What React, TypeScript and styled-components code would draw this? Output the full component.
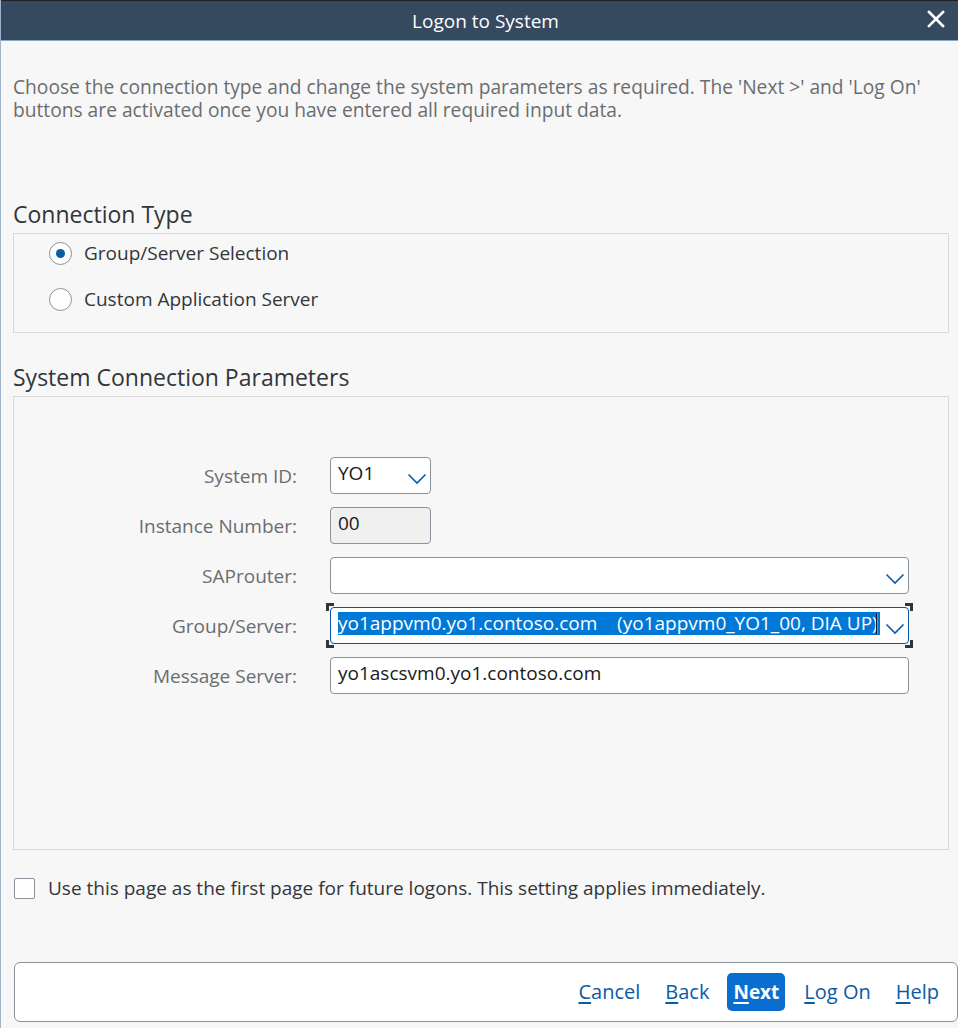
import React from "react";
import styled, { createGlobalStyle } from "styled-components";

const Global = createGlobalStyle`
  html, body { margin: 0; padding: 0; background: #f7f7f7; }
  body { font-family: "Open Sans", "Noto Sans", sans-serif; }
  * { box-sizing: border-box; }
`;

const Window = styled.div`
  width: 958px;
  height: 1028px;
  background: #f7f7f7;
  border-left: 1px solid #9fb4cc;
  display: flex;
  flex-direction: column;
  overflow: hidden;
`;

const TitleBar = styled.div`
  height: 41px;
  flex: none;
  background: #354a5f;
  border-top: 1px solid #1c2228;
  border-bottom: 1px solid #8aa6c4;
  display: flex;
  align-items: center;
  justify-content: center;
  padding-left: 12px;
  position: relative;
  color: #ffffff;
  font-size: 19px;
`;

const CloseButton = styled.div`
  position: absolute;
  right: 12px;
  top: 8px;
  width: 20px;
  height: 20px;
  display: flex;
  align-items: center;
  justify-content: center;
`;

const Body = styled.div`
  flex: 1;
  display: flex;
  flex-direction: column;
  padding: 34px 8px 0 12px;
`;

const Intro = styled.p`
  margin: 0;
  font-size: 19.2px;
  line-height: 23px;
  color: #6a6d70;
`;

const SectionTitle = styled.h2<{ $top: number }>`
  margin: ${(p) => p.$top}px 0 5px 0;
  font-size: 23px;
  font-weight: 400;
  line-height: 28px;
  color: #32363a;
`;

const Group = styled.div`
  border: 1px solid #d9d9d9;
  margin-right: 1px;
`;

const RadioGroup = styled(Group)`
  height: 100px;
  padding: 1px 0 0 35px;
  display: flex;
  flex-direction: column;
  gap: 10px;
`;

const RadioRow = styled.label`
  height: 36px;
  display: flex;
  align-items: center;
  gap: 12px;
  font-size: 19px;
  color: #32363a;
`;

const RadioCircle = styled.span<{ $checked?: boolean }>`
  width: 23px;
  height: 23px;
  border-radius: 50%;
  border: 1px solid #89919a;
  background: #ffffff;
  display: flex;
  align-items: center;
  justify-content: center;
  &::after {
    content: "";
    width: 9px;
    height: 9px;
    border-radius: 50%;
    background: ${(p) => (p.$checked ? "#0a5ea8" : "transparent")};
  }
`;

const ParamGroup = styled(Group)`
  height: 454px;
  padding: 60px 39px 0 0;
  display: grid;
  grid-template-columns: 283px minmax(0, 1fr);
  column-gap: 33px;
  row-gap: 13px;
  align-content: start;
`;

const Label = styled.div`
  height: 37px;
  display: flex;
  align-items: center;
  justify-content: flex-end;
  font-size: 19px;
  color: #6a6d70;
`;

const Field = styled.div<{ $width?: number; $disabled?: boolean; $focused?: boolean }>`
  position: relative;
  height: 37px;
  width: ${(p) => (p.$width ? `${p.$width}px` : "100%")};
  min-width: 0;
  border: 1px solid ${(p) => (p.$focused ? "#0854a0" : "#89919a")};
  border-radius: 4px;
  background: ${(p) => (p.$disabled ? "#f0f0f0" : "#ffffff")};
  display: flex;
  align-items: flex-start;
  padding: 3px 28px 0 7px;
  font-size: 19px;
  color: #1a1a1a;
  white-space: nowrap;
`;

const FieldText = styled.span`
  line-height: 24px;
`;

const Selected = styled.span`
  flex: 1;
  min-width: 0;
  margin-top: 1px;
  background: #0078d7;
  color: #ffffff;
  line-height: 23px;
  white-space: pre;
  overflow: hidden;
  display: block;
  position: relative;
`;

const Caret = styled.span`
  position: absolute;
  right: 3px;
  top: 1px;
  width: 1px;
  height: 21px;
  background: #1a1a1a;
  box-shadow: 1px 0 0 #e07a10;
`;

const Chevron = styled.svg`
  position: absolute;
  right: 3px;
  top: 15px;
`;

const Bracket = styled.span<{ $v: "top" | "bottom"; $h: "left" | "right" }>`
  position: absolute;
  width: 8px;
  height: 8px;
  ${(p) => p.$v}: -5px;
  ${(p) => p.$h}: -5px;
  border-${(p) => p.$v}: 3px solid #32363a;
  border-${(p) => p.$h}: 3px solid #32363a;
`;

const CheckRow = styled.label`
  display: flex;
  align-items: center;
  gap: 13px;
  margin: 27px 0 0 1px;
  font-size: 19px;
  color: #32363a;
  height: 22px;
`;

const CheckBox = styled.span`
  width: 21px;
  height: 21px;
  border: 1px solid #89919a;
  border-radius: 2px;
  background: #ffffff;
`;

const Footer = styled.div`
  margin: 63px -8px 0 1px;
  height: 60px;
  background: #ffffff;
  border: 1px solid #89919a;
  border-radius: 6px;
  display: flex;
  align-items: center;
  justify-content: flex-end;
  padding: 0 18px 0 0;
`;

const LinkButton = styled.span<{ $ml: number }>`
  margin-left: ${(p) => p.$ml}px;
  font-size: 20px;
  color: #0b5aa4;
  line-height: 38px;
  u { text-decoration-thickness: 1.5px; text-underline-offset: 3px; }
`;

const PrimaryButton = styled.span<{ $ml: number }>`
  margin-left: ${(p) => p.$ml}px;
  height: 38px;
  padding: 0 6px;
  border-radius: 5px;
  background: #0a6ed1;
  color: #ffffff;
  font-weight: 700;
  font-size: 19px;
  display: flex;
  align-items: center;
  u { text-decoration-thickness: 1.5px; text-underline-offset: 3px; }
`;

const ChevronIcon = () => (
  <Chevron width="20" height="12" viewBox="0 0 20 12">
    <path d="M1.5 1.5 L10 10 L18.5 1.5" fill="none" stroke="#0a5ea8" strokeWidth="1.6" />
  </Chevron>
);

export default function App() {
  return (
    <>
      <Global />
      <Window>
        <TitleBar>
          Logon to System
          <CloseButton>
            <svg width="18" height="18" viewBox="0 0 18 18">
              <path d="M2 2 L16 16 M16 2 L2 16" stroke="#ffffff" strokeWidth="2.6" strokeLinecap="square" />
            </svg>
          </CloseButton>
        </TitleBar>
        <Body>
          <Intro>
            Choose the connection type and change the system parameters as required. The 'Next &gt;' and 'Log On'
            <br />
            buttons are activated once you have entered all required input data.
          </Intro>
          <SectionTitle $top={79}>Connection Type</SectionTitle>
          <RadioGroup>
            <RadioRow>
              <RadioCircle $checked />
              Group/Server Selection
            </RadioRow>
            <RadioRow>
              <RadioCircle />
              Custom Application Server
            </RadioRow>
          </RadioGroup>
          <SectionTitle $top={30}>System Connection Parameters</SectionTitle>
          <ParamGroup>
            <Label>System ID:</Label>
            <Field $width={101}>
              <FieldText>YO1</FieldText>
              <ChevronIcon />
            </Field>
            <Label>Instance Number:</Label>
            <Field $width={101} $disabled>
              <FieldText>00</FieldText>
            </Field>
            <Label>SAProuter:</Label>
            <Field>
              <FieldText></FieldText>
              <ChevronIcon />
            </Field>
            <Label>Group/Server:</Label>
            <Field $focused>
              <Selected>
                {"yo1appvm0.yo1.contoso.com    (yo1appvm0_YO1_00, DIA UP)"}
                <Caret />
              </Selected>
              <ChevronIcon />
              <Bracket $v="top" $h="left" />
              <Bracket $v="top" $h="right" />
              <Bracket $v="bottom" $h="left" />
              <Bracket $v="bottom" $h="right" />
            </Field>
            <Label>Message Server:</Label>
            <Field>
              <FieldText>yo1ascsvm0.yo1.contoso.com</FieldText>
            </Field>
          </ParamGroup>
          <CheckRow>
            <CheckBox />
            Use this page as the first page for future logons. This setting applies immediately.
          </CheckRow>
          <Footer>
            <LinkButton $ml={0}><u>C</u>ancel</LinkButton>
            <LinkButton $ml={25}><u>B</u>ack</LinkButton>
            <PrimaryButton $ml={18}><u>N</u>ext</PrimaryButton>
            <LinkButton $ml={19}><u>L</u>og On</LinkButton>
            <LinkButton $ml={25}><u>H</u>elp</LinkButton>
          </Footer>
        </Body>
      </Window>
    </>
  );
}
